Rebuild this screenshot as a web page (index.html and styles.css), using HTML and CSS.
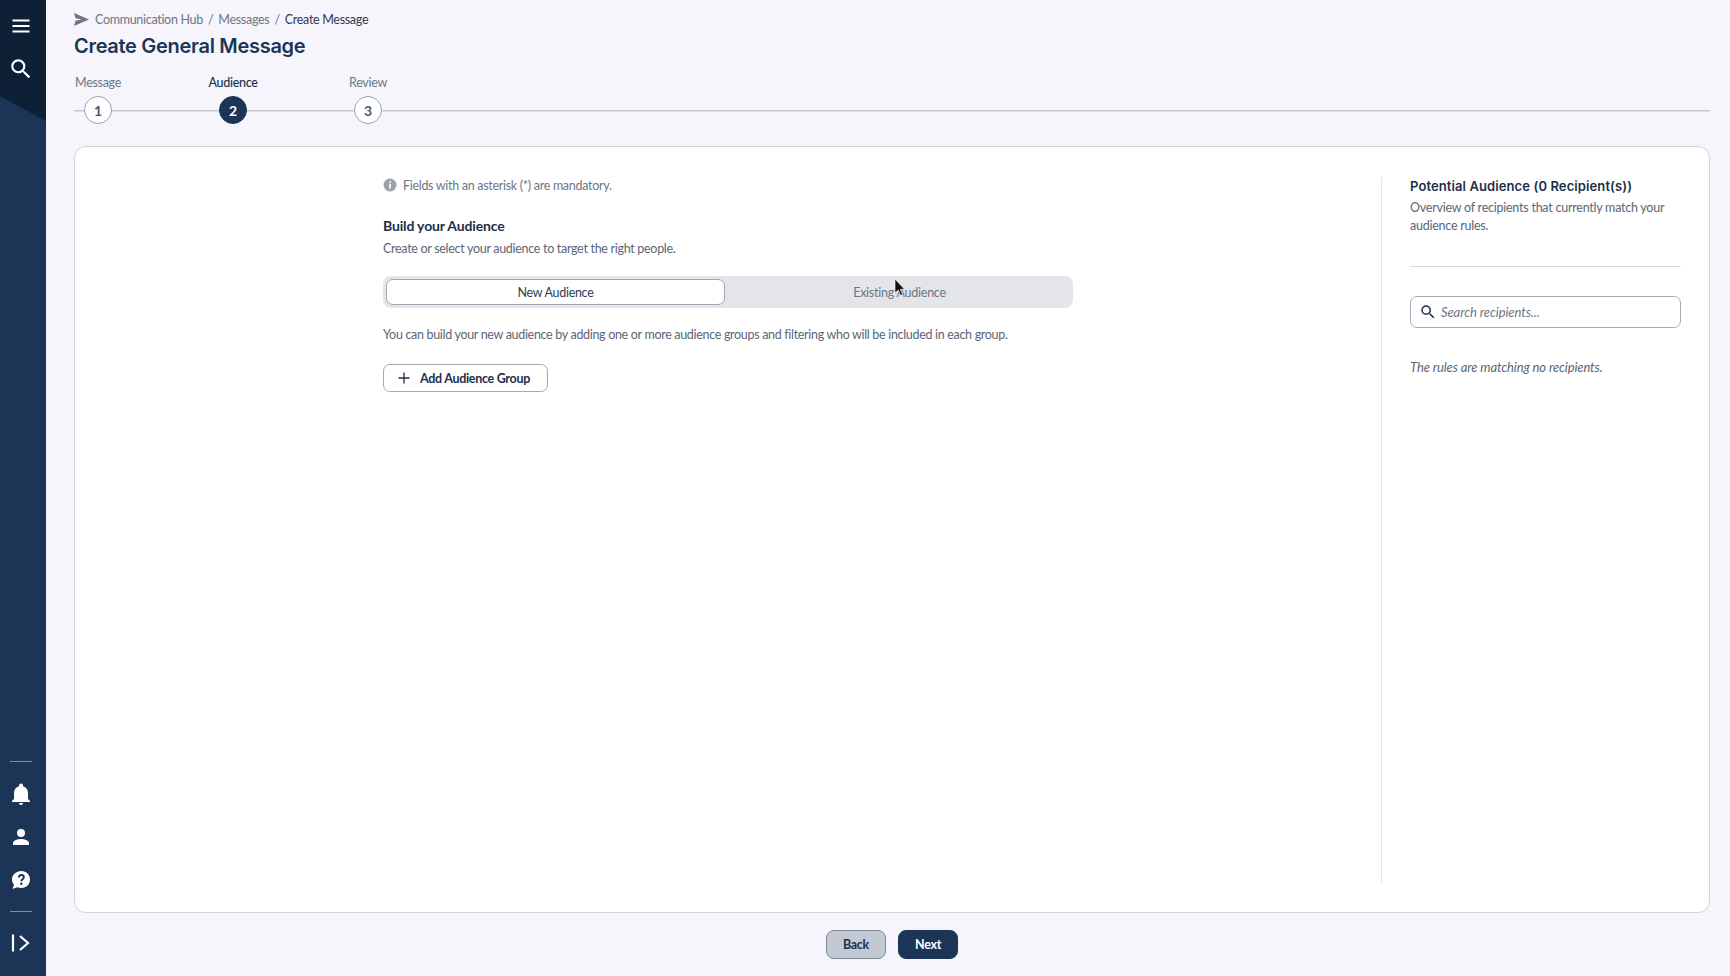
FILE: index.html
```html
<!DOCTYPE html>
<html lang="en">
<head>
<meta charset="utf-8">
<title>Create General Message</title>
<link rel="stylesheet" href="styles.css">
</head>
<body>
<div class="app">
  <nav class="sidebar">
    <div class="side-top">
      <button class="side-btn"><svg width="24" height="24" viewBox="0 0 24 24" fill="#fff"><path d="M3.500 5.500h17v2h-17zM3.500 11h17v2h-17zM3.500 16.500h17v2h-17z"/></svg></button>
      <button class="side-btn"><svg width="26" height="26" viewBox="0 0 24 24" fill="#fff"><path d="M15.500 14h-.79l-.28-.27A6.470 6.470 0 0 0 16 9.500 6.500 6.500 0 1 0 9.500 16c1.610 0 3.090-.59 4.230-1.570l.27.28v.79l5 4.990L20.490 19l-4.990-5zm-6 0C7.010 14 5 11.990 5 9.500S7.010 5 9.500 5 14 7.010 14 9.500 11.990 14 9.500 14z"/></svg></button>
    </div>
    <div class="side-bottom">
      <hr class="side-rule">
      <button class="side-btn"><svg width="24" height="24" viewBox="0 0 24 24" fill="#fff"><path d="M12 23c1.100 0 2-.9 2-2h-4c0 1.100.9 2 2 2zm7-6v-6c0-3.300-1.800-6-5-6.800V3.500a2 2 0 0 0-4 0v.7C6.800 5 5 7.700 5 11v6l-2 2v1h18v-1l-2-2z"/></svg></button>
      <button class="side-btn"><svg width="24" height="24" viewBox="0 0 24 24" fill="#fff"><path d="M12 12a4 4 0 1 0 0-8 4 4 0 0 0 0 8zm0 2c-2.700 0-8 1.300-8 4v2h16v-2c0-2.700-5.300-4-8-4z"/></svg></button>
      <button class="side-btn"><svg width="24" height="24" viewBox="0 0 24 24"><path fill="#fff" d="M12.500 3C7 3 3 6.700 3 11.500c0 2 .7 3.800 2 5.200L3.500 21l4.800-1.800c1.300.6 2.700.8 4.200.8 5 0 8.500-3.800 8.500-8.500S17.500 3 12.500 3z"/><path fill="none" stroke="#1c3557" stroke-width="2" d="M9.800 9.500c0-1.500 1.100-2.400 2.500-2.400s2.500.9 2.500 2.200c0 1.900-2.500 2-2.500 3.900"/><circle cx="12.300" cy="15.700" r="1.200" fill="#1c3557"/></svg></button>
      <hr class="side-rule">
      <button class="side-btn"><svg width="24" height="24" viewBox="0 0 24 24" fill="none" stroke="#fff" stroke-width="2.200"><path d="M4 3.500v17"/><path d="M11 5l8 7-8 7"/></svg></button>
    </div>
  </nav>
  <main class="main">
    <div class="crumbs">
      <svg class="crumb-icon" width="15" height="13" viewBox="0 0 15 13" fill="#6c7685"><path d="M0 0l15 6.500L0 13l1.500-5.200 6-1.300-6-1.300z"/></svg>
      <span>Communication Hub</span><span class="sep">/</span><span>Messages</span><span class="sep">/</span><span class="crumb-now">Create Message</span>
    </div>
    <h1 class="title">Create General Message</h1>
    <div class="stepper">
      <div class="step"><span class="step-label">Message</span><span class="step-num">1</span></div>
      <div class="step step-active"><span class="step-label">Audience</span><span class="step-num">2</span></div>
      <div class="step"><span class="step-label">Review</span><span class="step-num">3</span></div>
    </div>
    <section class="card">
      <div class="form">
        <p class="hint"><svg width="14" height="14" viewBox="0 0 14 14"><circle cx="7" cy="7" r="6.500" fill="#9aa2ae"/><rect x="6.200" y="6" width="1.700" height="4.500" fill="#fff"/><rect x="6.200" y="3.400" width="1.700" height="1.700" fill="#fff"/></svg>Fields with an asterisk (*) are mandatory.</p>
        <h2 class="form-title">Build your Audience</h2>
        <p class="text">Create or select your audience to target the right people.</p>
        <div class="segment">
          <button class="seg seg-on">New Audience</button>
          <button class="seg seg-off">Existing Audience</button>
        </div>
        <p class="text explain">You can build your new audience by adding one or more audience groups and filtering who will be included in each group.</p>
        <button class="add-btn"><svg width="12" height="12" viewBox="0 0 12 12" fill="none" stroke="#1c2f4a" stroke-width="1.300"><path d="M6 .5v11M.5 6h11"/></svg>Add Audience Group</button>
      </div>
      <aside class="panel">
        <h2 class="panel-title">Potential Audience (0 Recipient(s))</h2>
        <p class="panel-text">Overview of recipients that currently match your audience rules.</p>
        <hr class="panel-rule">
        <div class="search"><svg width="18" height="18" viewBox="0 0 24 24" fill="#1c2f4a"><path d="M15.500 14h-.79l-.28-.27A6.470 6.470 0 0 0 16 9.500 6.500 6.500 0 1 0 9.500 16c1.610 0 3.090-.59 4.230-1.570l.27.28v.79l5 4.990L20.490 19l-4.990-5zm-6 0C7.010 14 5 11.990 5 9.500S7.010 5 9.500 5 14 7.010 14 9.500 11.990 14 9.500 14z"/></svg><span>Search recipients...</span></div>
        <p class="empty">The rules are matching no recipients.</p>
      </aside>
    </section>
    <footer class="actions">
      <button class="btn btn-back">Back</button>
      <button class="btn btn-next">Next</button>
    </footer>
  </main>
</div>
<svg class="cursor" width="11" height="17" viewBox="0 0 11 17"><path d="M1 0v14l3.300-3 2.300 5.500 2-.9-2.300-5.300H10.500z" fill="#111" stroke="#fff" stroke-width=".6"/></svg>
</body>
</html>
```
FILE: styles.css
```css
* { box-sizing: border-box; }
html, body { margin: 0; height: 100%; }
body {
  width: 1730px;
  height: 976px;
  overflow: hidden;
  background: #f5f5fb;
  font-family: Lato, "Liberation Sans", sans-serif;
  font-size: 12.5px;
  letter-spacing: -.3px;
  color: #1c2f4a;
  position: relative;
}
button { font-family: inherit; letter-spacing: inherit; cursor: pointer; }
.app { display: flex; height: 976px; }

.sidebar {
  width: 46px;
  flex: none;
  padding-right: 4px;
  background: linear-gradient(208.500deg, #0e2036 0, #0e2036 106px, #1c3557 107px);
  display: flex;
  flex-direction: column;
  justify-content: space-between;
  align-items: center;
}
.side-top { display: flex; flex-direction: column; align-items: center; padding-top: 13px; gap: 17px; }
.side-bottom { display: flex; flex-direction: column; align-items: center; padding-bottom: 20px; }
.side-btn {
  width: 32px; height: 26px; padding: 0; border: 0; background: none;
  display: flex; align-items: center; justify-content: center;
}
.side-bottom .side-btn + .side-btn { margin-top: 17px; }
.side-rule { width: 22px; height: 1px; border: 0; margin: 0; background: #7f8fa6; }
.side-bottom .side-rule:first-child { margin-bottom: 19px; }
.side-bottom .side-rule:not(:first-child) { margin: 18px 0; }

.main { flex: 1; min-width: 0; padding: 12px 20px 0 28px; display: flex; flex-direction: column; }
.crumbs { display: flex; align-items: center; height: 15px; color: #6c7685; }
.crumb-icon { margin-right: 6px; }
.sep { margin: 0 5px; }
.crumb-now { color: #2c3c52; }
.title {
  margin: 7px 0 0;
  font: 600 20px/24px Inter, Lato, sans-serif;
  letter-spacing: -.3px;
  color: #1c3557;
}
.stepper {
  margin-top: 17px;
  height: 56px;
  display: flex;
  background: linear-gradient(#c5c9cf, #c5c9cf) 0 35px / 100% 1.500px no-repeat;
}
.step { width: 48px; margin-right: 87px; display: flex; flex-direction: column; align-items: center; color: #6c7685; }
.step-label { line-height: 16px; white-space: nowrap; }
.step-num {
  width: 28px; height: 28px; margin-top: 5px; border-radius: 50%;
  border: 1px solid #9aa2ae; background: #fff; color: #4c5768;
  display: flex; align-items: center; justify-content: center;
  font-size: 14px; font-weight: 700; letter-spacing: 0;
}
.step-active .step-label { color: #1c2f4a; font-weight: 500; }
.step-active .step-num { background: #1c3557; border-color: #1c3557; color: #fff; }

.card {
  margin-top: 15px;
  height: 767px;
  background: #fff;
  border: 1px solid #d2d4d9;
  border-radius: 12px;
  padding: 30px 28px 27px 308px;
  display: flex;
  justify-content: space-between;
}
.form { width: 690px; }
.hint { margin: 0; display: flex; align-items: center; gap: 5px; height: 16px; color: #6c7685; }
.hint svg { margin-right: 1px; }
.form-title { margin: 24px 0 0; font-size: 14px; line-height: 18px; font-weight: 700; letter-spacing: -.15px; color: #1c2f4a; }
.text { margin: 6px 0 0; line-height: 16px; color: #5c6676; }
.segment {
  margin-top: 19px;
  height: 32px;
  padding: 3px;
  border-radius: 8px;
  background: #e3e5e9;
  display: flex;
}
.seg {
  flex: 1; border: 0; background: none; padding: 0;
  font-size: 12.5px; color: #6c7685; border-radius: 7px;
}
.seg-off { padding-left: 4px; letter-spacing: -.25px; }
.seg-on { flex: 0 0 339px; background: #fff; color: #2c3c52; border: 1px solid #9fa5af; }
.explain { margin-top: 19px; letter-spacing: -.315px; }
.add-btn {
  margin-top: 21px;
  height: 28px;
  width: 165px;
  padding: 0 0 0 14px;
  display: flex; align-items: center; gap: 10px;
  background: #fff;
  border: 1px solid #a5aab3;
  border-radius: 7px;
  font-size: 12.5px; font-weight: 700; color: #1c2f4a;
}
.panel {
  width: 300px;
  height: 706px;
  border-left: 1px solid #e4e5e8;
  padding-left: 28px;
}
.panel-title { margin: 0; font: 600 13px/18px Inter, Lato, sans-serif; letter-spacing: .1px; color: #1c2f4a; white-space: nowrap; }
.panel-text { margin: 4px 0 0; line-height: 18px; letter-spacing: -.24px; color: #5c6676; }
.panel-rule { height: 1px; margin: 31px 0 0; border: 0; background: #d9dbdf; }
.search {
  margin-top: 29px;
  height: 32px;
  border: 1px solid #a5aab3;
  border-radius: 7px;
  display: flex; align-items: center; gap: 4px;
  padding-left: 8px;
  font-size: 13px; font-style: italic; letter-spacing: -.1px; color: #6c7685;
}
.empty { margin: 31px 0 0; font-size: 13px; line-height: 16px; font-style: italic; letter-spacing: -.12px; color: #5c6676; }

.actions { display: flex; justify-content: center; gap: 12px; margin-top: 17px; }
.btn { width: 60px; height: 29px; border-radius: 8px; font-size: 12.5px; font-weight: 700; padding: 0; }
.btn-back { background: #c3c9d2; border: 1px solid #7d8798; color: #1c2f4a; }
.btn-next { background: #1c3557; border: 1px solid #1c3557; color: #fff; }

.cursor { position: absolute; left: 894px; top: 279px; }
```
